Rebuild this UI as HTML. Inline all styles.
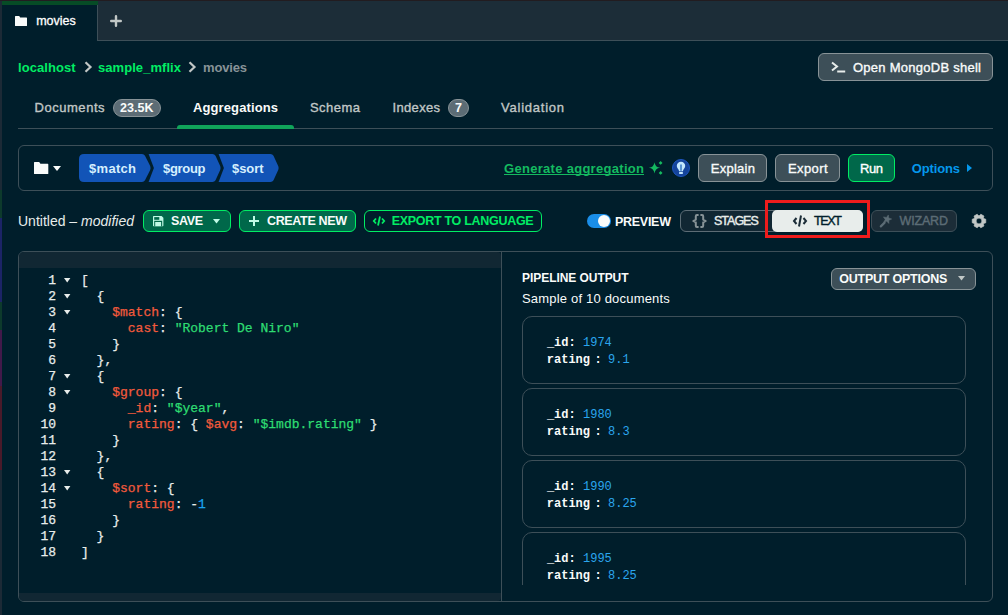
<!DOCTYPE html>
<html><head><meta charset="utf-8">
<style>
*{box-sizing:border-box;margin:0;padding:0}
html,body{width:1008px;height:615px;overflow:hidden;background:#001E2B;font-family:"Liberation Sans",sans-serif;color:#E8EDEB;position:relative}
.a{position:absolute}
.t{position:absolute;white-space:nowrap;line-height:1}
svg{position:absolute;overflow:visible}
</style></head><body>
<div class="a" style="left:0px;top:0px;width:1008px;height:1px;background:#221c20;"></div>
<div class="a" style="left:0px;top:1px;width:2px;height:614px;background:#1c2a36;"></div>
<div class="a" style="left:0px;top:190px;width:2px;height:28px;background:#0d3a2c;"></div>
<div class="a" style="left:0px;top:218px;width:2px;height:84px;background:#1c2466;"></div>
<div class="a" style="left:0px;top:302px;width:2px;height:28px;background:#0d3a2c;"></div>
<div class="a" style="left:0px;top:330px;width:2px;height:56px;background:#42194a;"></div>
<div class="a" style="left:0px;top:386px;width:2px;height:84px;background:#4a1a2a;"></div>
<div class="a" style="left:2px;top:1px;width:96px;height:4px;background:#064c26;"></div>
<div class="a" style="left:97px;top:1px;width:911px;height:40px;background:#1C2D38;border-left:1px solid #3D4F58;border-bottom:1px solid #3D4F58;"></div>
<div class="a" style="left:97px;top:1px;width:1px;height:4px;background:#064c26;"></div>
<svg style="left:15px;top:16px" width="12" height="10" viewBox="0 0 12 10"><path d="M0 0.6Q0 0 0.6 0H4.2L5.2 1.4H11.4Q12 1.4 12 2V9.4Q12 10 11.4 10H0.6Q0 10 0 9.4Z" fill="#F9FBFA"/></svg>
<div class="t" style="left:36.20px;top:14.72px;font-size:12.5px;color:#FFFFFF;-webkit-text-stroke:0.3px #FFFFFF;">movies</div>
<svg style="left:110px;top:15px" width="12" height="12" viewBox="0 0 12 12"><path d="M6 1.2V10.8M1.2 6H10.8" stroke="#C1C7C6" stroke-width="2.4" stroke-linecap="round"/></svg>
<div class="t" style="left:18.00px;top:61.00px;font-size:13px;color:#00ED64;font-weight:bold;letter-spacing:0.075px;">localhost</div>
<svg style="left:84px;top:61px" width="8" height="12" viewBox="0 0 8 12"><path d="M1.5 1.2L6.5 6L1.5 10.8" stroke="#C1C7C6" stroke-width="2.2" fill="none"/></svg>
<div class="t" style="left:98.00px;top:61.00px;font-size:13px;color:#00ED64;font-weight:bold;letter-spacing:0.055px;">sample_mflix</div>
<svg style="left:188px;top:61px" width="8" height="12" viewBox="0 0 8 12"><path d="M1.5 1.2L6.5 6L1.5 10.8" stroke="#C1C7C6" stroke-width="2.2" fill="none"/></svg>
<div class="t" style="left:203.00px;top:61.00px;font-size:13px;color:#889397;font-weight:bold;letter-spacing:-0.160px;">movies</div>
<div class="a" style="left:818px;top:53px;width:175px;height:28px;background:#3D4F58;border:1px solid #889397;border-radius:6px;"></div>
<svg style="left:831px;top:61px" width="15" height="13" viewBox="0 0 15 13"><path d="M1 1.5L6 5.5L1 9.5" stroke="#E8EDEB" stroke-width="2" fill="none"/><path d="M6.2 10.5H14.2" stroke="#E8EDEB" stroke-width="2"/></svg>
<div class="t" style="left:853.00px;top:61.00px;font-size:13px;color:#F9FBFA;letter-spacing:0.259px;-webkit-text-stroke:0.35px #F9FBFA;">Open MongoDB shell</div>
<div class="a" style="left:18px;top:128px;width:975px;height:1px;background:#3D4F58;"></div>
<div class="a" style="left:177px;top:125px;width:117px;height:4px;background:#10A45A;border-radius:3px 3px 0 0;"></div>
<div class="t" style="left:34.50px;top:101.00px;font-size:13px;color:#C1C7C6;letter-spacing:0.537px;-webkit-text-stroke:0.35px #C1C7C6;">Documents</div>
<div class="a" style="left:113px;top:99px;width:48px;height:18px;background:#5C6C75;border:1px solid #889397;border-radius:9px;"></div>
<div class="t" style="left:120.00px;top:102.12px;font-size:12.5px;color:#F9FBFA;font-weight:bold;letter-spacing:0.050px;">23.5K</div>
<div class="t" style="left:193.00px;top:101.00px;font-size:13px;color:#F9FBFA;font-weight:bold;letter-spacing:0.109px;">Aggregations</div>
<div class="t" style="left:310.00px;top:101.00px;font-size:13px;color:#C1C7C6;letter-spacing:0.440px;-webkit-text-stroke:0.35px #C1C7C6;">Schema</div>
<div class="t" style="left:392.50px;top:101.00px;font-size:13px;color:#C1C7C6;letter-spacing:0.333px;-webkit-text-stroke:0.35px #C1C7C6;">Indexes</div>
<div class="a" style="left:448px;top:99px;width:21px;height:18px;background:#5C6C75;border:1px solid #889397;border-radius:9px;"></div>
<div class="t" style="left:455.00px;top:102.12px;font-size:12.5px;color:#F9FBFA;font-weight:bold;">7</div>
<div class="t" style="left:501.00px;top:101.00px;font-size:13px;color:#C1C7C6;letter-spacing:0.767px;-webkit-text-stroke:0.35px #C1C7C6;">Validation</div>
<div class="a" style="left:18px;top:145px;width:975px;height:46px;background:transparent;border:1px solid #3D4F58;border-radius:6px;"></div>
<svg style="left:34px;top:162px" width="14.3" height="12" viewBox="0 0 14.3 12"><path d="M0 0.6Q0 0 0.6 0H5.2L6.4 1.8H13.7Q14.3 1.8 14.3 2.4V11.4Q14.3 12 13.7 12H0.6Q0 12 0 11.4Z" fill="#F9FBFA"/></svg>
<svg style="left:53px;top:166px" width="8" height="5" viewBox="0 0 8 5"><path d="M0 0H8L4 5Z" fill="#F9FBFA"/></svg>
<svg style="left:79px;top:154px" width="202" height="28" viewBox="0 0 202 28"><path d="M0 5Q0 0 5 0H63Q65 0 66 1.8L71.2 12Q72 14 71.2 16L66 26.2Q65 28 63 28H5Q0 28 0 23Z" fill="#1254B7"/><path d="M69.6 0H133.5Q135.5 0 136.5 1.8L141.2 12Q142 14 141.2 16L136.5 26.2Q135.5 28 133.5 28H69.6L74.9 14Z" fill="#1254B7"/><path d="M139.6 0H191.5Q193.5 0 194.5 1.8L199.2 12Q200 14 199.2 16L194.5 26.2Q193.5 28 191.5 28H139.6L144.9 14Z" fill="#1254B7"/></svg>
<div class="t" style="left:89.00px;top:162.00px;font-size:13px;color:#D6EFFE;font-weight:bold;letter-spacing:0.300px;">$match</div>
<div class="t" style="left:163.00px;top:162.00px;font-size:13px;color:#D6EFFE;font-weight:bold;letter-spacing:-0.320px;">$group</div>
<div class="t" style="left:232.00px;top:162.00px;font-size:13px;color:#D6EFFE;font-weight:bold;letter-spacing:-0.075px;">$sort</div>
<div class="t" style="left:504.00px;top:162.00px;font-size:13px;color:#14BA60;font-weight:bold;letter-spacing:0.295px;">Generate aggregation</div>
<div class="a" style="left:504px;top:174px;width:140px;height:1px;background:#14BA60;"></div>
<svg style="left:648px;top:161px" width="16" height="14" viewBox="0 0 16 14"><path d="M6.5 1.2Q7.1 6.2 12.1 6.8Q7.1 7.4 6.5 12.4Q5.9 7.4 0.9 6.8Q5.9 6.2 6.5 1.2Z" fill="#14BA60"/><path d="M12.6 0L14.5 1.9L12.6 3.8L10.7 1.9Z" fill="#14BA60"/><path d="M12.6 10L14.5 11.9L12.6 13.8L10.7 11.9Z" fill="#14BA60"/></svg>
<svg style="left:672px;top:159px" width="18" height="18" viewBox="0 0 18 18"><circle cx="9" cy="9" r="8.5" fill="#15449c" stroke="#1d56c0" stroke-width="1"/><path d="M9 2.7C6.6 2.7 4.8 4.5 4.8 6.8C4.8 8.3 5.6 9.3 6.3 10.2C6.8 10.8 7 11.4 7 12.2H11C11 11.4 11.2 10.8 11.7 10.2C12.4 9.3 13.2 8.3 13.2 6.8C13.2 4.5 11.4 2.7 9 2.7Z" fill="#C3E7FE"/><rect x="7" y="13" width="4" height="2" rx="0.8" fill="#C3E7FE"/><path d="M9 5.6V11.8" stroke="#2a6fc0" stroke-width="1.4"/></svg>
<div class="a" style="left:698px;top:154px;width:69px;height:28px;background:#3D4F58;border:1px solid #889397;border-radius:6px;"></div>
<div class="t" style="left:710.70px;top:162.00px;font-size:13px;color:#F9FBFA;letter-spacing:0.283px;-webkit-text-stroke:0.35px #F9FBFA;">Explain</div>
<div class="a" style="left:775px;top:154px;width:65px;height:28px;background:#3D4F58;border:1px solid #889397;border-radius:6px;"></div>
<div class="t" style="left:788.00px;top:162.00px;font-size:13px;color:#F9FBFA;letter-spacing:0.400px;-webkit-text-stroke:0.35px #F9FBFA;">Export</div>
<div class="a" style="left:848px;top:154px;width:47px;height:28px;background:#00684A;border:1px solid #00ED64;border-radius:6px;"></div>
<div class="t" style="left:860.00px;top:162.00px;font-size:13px;color:#FFFFFF;letter-spacing:-0.400px;-webkit-text-stroke:0.35px #FFFFFF;">Run</div>
<div class="t" style="left:911.70px;top:162.00px;font-size:13px;color:#0498EC;font-weight:bold;letter-spacing:-0.133px;">Options</div>
<svg style="left:967px;top:164px" width="5" height="8" viewBox="0 0 5 8"><path d="M0 0L5 4L0 8Z" fill="#0498EC"/></svg>
<div class="t" style="left:18px;top:214.15px;font-size:14px;color:#E8EDEB;">Untitled – <i>modified</i></div>
<div class="a" style="left:143px;top:210px;width:88px;height:22px;background:#00684A;border:1px solid #00ED64;border-radius:6px;"></div>
<svg style="left:152.8px;top:216px" width="10.4" height="10.2" viewBox="0 0 10.4 10.2"><path d="M0 0.6Q0 0 0.6 0H8.6L10.4 1.8V9.6Q10.4 10.2 9.8 10.2H0.6Q0 10.2 0 9.6Z" fill="#C0FAE6"/><rect x="1.2" y="1.1" width="5.1" height="2.7" fill="#00684A"/><rect x="1.2" y="4.8" width="8" height="5.4" fill="#00684A"/><rect x="2.2" y="6" width="5.9" height="4.2" fill="#C0FAE6"/></svg>
<div class="t" style="left:171.00px;top:215.42px;font-size:12.5px;color:#F9FBFA;font-weight:bold;letter-spacing:-0.367px;">SAVE</div>
<svg style="left:213px;top:219px" width="7" height="5" viewBox="0 0 7 5"><path d="M0 0H7L3.5 4.5Z" fill="#C0FAE6"/></svg>
<div class="a" style="left:239px;top:210px;width:117px;height:22px;background:#00684A;border:1px solid #00ED64;border-radius:6px;"></div>
<svg style="left:248px;top:215px" width="12" height="12" viewBox="0 0 12 12"><path d="M6 1V11M1 6H11" stroke="#C0FAE6" stroke-width="2"/></svg>
<div class="t" style="left:267.00px;top:215.42px;font-size:12.5px;color:#F9FBFA;font-weight:bold;letter-spacing:-0.344px;">CREATE NEW</div>
<div class="a" style="left:364px;top:210px;width:178px;height:22px;background:transparent;border:1px solid #00ED64;border-radius:6px;"></div>
<svg style="left:373px;top:216px" width="12" height="10" viewBox="0 0 12 10"><path d="M3 2.5L0.8 5L3 7.5M9 2.5L11.2 5L9 7.5M7 0.5L5 9.5" stroke="#00ED64" stroke-width="1.8" fill="none"/></svg>
<div class="t" style="left:391.70px;top:215.42px;font-size:12.5px;color:#00ED64;font-weight:bold;letter-spacing:-0.294px;">EXPORT TO LANGUAGE</div>
<div class="a" style="left:587px;top:214px;width:24px;height:14px;background:#1A8EE8;border-radius:7px;"></div>
<div class="a" style="left:598px;top:215px;width:12px;height:12px;background:#F9FBFA;border-radius:6px;"></div>
<div class="t" style="left:615.00px;top:216.42px;font-size:12.5px;color:#F9FBFA;font-weight:bold;letter-spacing:-0.283px;">PREVIEW</div>
<div class="a" style="left:680px;top:210px;width:183px;height:22px;background:#112733;border:1px solid #5C6C75;border-radius:6px;"></div>
<svg style="left:692.4px;top:214px" width="15" height="14" viewBox="0 0 15 14"><path d="M6.6 1H5Q3.8 1 3.8 2.2V5.6L1.3 7L3.8 8.4V11.8Q3.8 13 5 13H6.6M8.4 1H10Q11.2 1 11.2 2.2V5.6L13.7 7L11.2 8.4V11.8Q11.2 13 10 13H8.4" stroke="#889397" stroke-width="2" fill="none" stroke-linejoin="round"/></svg>
<div class="t" style="left:714.00px;top:215.42px;font-size:12.5px;color:#E8EDEB;letter-spacing:-1.000px;-webkit-text-stroke:0.4px #E8EDEB;">STAGES</div>
<div class="a" style="left:772px;top:210px;width:91px;height:22px;background:#E8EDEB;border-radius:5px;"></div>
<svg style="left:793px;top:215px" width="14" height="12" viewBox="0 0 14 12"><path d="M3.5 3L1 6L3.5 9M10.5 3L13 6L10.5 9M8 0.5L6 11.5" stroke="#1C2D38" stroke-width="2" fill="none"/></svg>
<div class="t" style="left:814.00px;top:215.42px;font-size:12.5px;color:#001E2B;letter-spacing:-1.333px;-webkit-text-stroke:0.4px #001E2B;">TEXT</div>
<div class="a" style="left:765px;top:200px;width:105px;height:38px;background:transparent;border:3px solid #EE1C1C;"></div>
<div class="a" style="left:871px;top:210px;width:86px;height:22px;background:#1C2D38;border:1px solid #3D4F58;border-radius:6px;"></div>
<svg style="left:878px;top:213px" width="16" height="16" viewBox="0 0 16 16"><path d="M2.8 13.4L6.6 9.6" stroke="#5C6C75" stroke-width="2.2" stroke-linecap="round"/><path d="M10.31 1.94 L10.74 5.02 L13.69 6.01 L10.89 7.37 L10.86 10.48 L8.71 8.24 L5.74 9.17 L7.20 6.43 L5.40 3.89 L8.46 4.44Z" fill="#5C6C75" stroke="#5C6C75" stroke-width="0.5" stroke-linejoin="round"/></svg>
<div class="t" style="left:899.60px;top:215.42px;font-size:12.5px;color:#5C6C75;letter-spacing:-0.180px;-webkit-text-stroke:0.4px #5C6C75;">WIZARD</div>
<svg style="left:971px;top:213px" width="16" height="16" viewBox="0 0 16 16"><path fill="#C1C7C6" fill-rule="evenodd" stroke="#C1C7C6" stroke-width="0.7" stroke-linejoin="round" d="M13.02 5.76 L14.76 6.20 L14.76 9.80 L13.02 10.24 L12.45 11.23 L12.94 12.96 L9.82 14.76 L8.57 13.47 L7.43 13.47 L6.18 14.76 L3.06 12.96 L3.55 11.23 L2.98 10.24 L1.24 9.80 L1.24 6.20 L2.98 5.76 L3.55 4.77 L3.06 3.04 L6.18 1.24 L7.43 2.53 L8.57 2.53 L9.82 1.24 L12.94 3.04 L12.45 4.77Z M8 5.1A2.9 2.9 0 1 0 8 10.9A2.9 2.9 0 1 0 8 5.1Z"/></svg>
<div class="a" style="left:18px;top:251px;width:975px;height:351px;background:transparent;border:1px solid #3D4F58;border-radius:6px;overflow:hidden;"></div>
<div class="a" style="left:19px;top:252px;width:482px;height:16px;background:#112733;border-radius:5px 4px 0 0;"></div>
<div class="a" style="left:19px;top:593px;width:482px;height:8px;background:#112733;border-radius:0 0 4px 5px;"></div>
<div class="a" style="left:501px;top:252px;width:1px;height:349px;background:#3D4F58;"></div>
<div class="a" style="left:0;top:272.54px;font-family:'Liberation Mono',monospace;font-size:13px;line-height:16px;white-space:pre;-webkit-text-stroke:0.25px currentColor">
<div class="a" style="left:0;top:0px;width:56px;text-align:right;color:#E8EDEB">1</div><svg style="left:64px;top:5.8px" width="6.4" height="4.4" viewBox="0 0 6.4 4.4"><path d="M0 0H6.4L3.2 4.4Z" fill="#E8EDEB"/></svg><div class="a" style="left:81px;top:0px"><span style="color:#E8EDEB">[</span></div>
<div class="a" style="left:0;top:16px;width:56px;text-align:right;color:#E8EDEB">2</div><svg style="left:64px;top:21.8px" width="6.4" height="4.4" viewBox="0 0 6.4 4.4"><path d="M0 0H6.4L3.2 4.4Z" fill="#E8EDEB"/></svg><div class="a" style="left:81px;top:16px"><span style="color:#E8EDEB">  {</span></div>
<div class="a" style="left:0;top:32px;width:56px;text-align:right;color:#E8EDEB">3</div><svg style="left:64px;top:37.8px" width="6.4" height="4.4" viewBox="0 0 6.4 4.4"><path d="M0 0H6.4L3.2 4.4Z" fill="#E8EDEB"/></svg><div class="a" style="left:81px;top:32px">    <span style="color:#F25A3C">$match</span><span style="color:#E8EDEB">: {</span></div>
<div class="a" style="left:0;top:48px;width:56px;text-align:right;color:#E8EDEB">4</div><div class="a" style="left:81px;top:48px">      <span style="color:#F25A3C">cast</span><span style="color:#E8EDEB">: </span><span style="color:#2EDC72">"Robert De Niro"</span></div>
<div class="a" style="left:0;top:64px;width:56px;text-align:right;color:#E8EDEB">5</div><div class="a" style="left:81px;top:64px"><span style="color:#E8EDEB">    }</span></div>
<div class="a" style="left:0;top:80px;width:56px;text-align:right;color:#E8EDEB">6</div><div class="a" style="left:81px;top:80px"><span style="color:#E8EDEB">  },</span></div>
<div class="a" style="left:0;top:96px;width:56px;text-align:right;color:#E8EDEB">7</div><svg style="left:64px;top:101.8px" width="6.4" height="4.4" viewBox="0 0 6.4 4.4"><path d="M0 0H6.4L3.2 4.4Z" fill="#E8EDEB"/></svg><div class="a" style="left:81px;top:96px"><span style="color:#E8EDEB">  {</span></div>
<div class="a" style="left:0;top:112px;width:56px;text-align:right;color:#E8EDEB">8</div><svg style="left:64px;top:117.8px" width="6.4" height="4.4" viewBox="0 0 6.4 4.4"><path d="M0 0H6.4L3.2 4.4Z" fill="#E8EDEB"/></svg><div class="a" style="left:81px;top:112px">    <span style="color:#F25A3C">$group</span><span style="color:#E8EDEB">: {</span></div>
<div class="a" style="left:0;top:128px;width:56px;text-align:right;color:#E8EDEB">9</div><div class="a" style="left:81px;top:128px">      <span style="color:#F25A3C">_id</span><span style="color:#E8EDEB">: </span><span style="color:#2EDC72">"$year"</span><span style="color:#E8EDEB">,</span></div>
<div class="a" style="left:0;top:144px;width:56px;text-align:right;color:#E8EDEB">10</div><div class="a" style="left:81px;top:144px">      <span style="color:#F25A3C">rating</span><span style="color:#E8EDEB">: { </span><span style="color:#F25A3C">$avg</span><span style="color:#E8EDEB">: </span><span style="color:#2EDC72">"$imdb.rating"</span><span style="color:#E8EDEB"> }</span></div>
<div class="a" style="left:0;top:160px;width:56px;text-align:right;color:#E8EDEB">11</div><div class="a" style="left:81px;top:160px"><span style="color:#E8EDEB">    }</span></div>
<div class="a" style="left:0;top:176px;width:56px;text-align:right;color:#E8EDEB">12</div><div class="a" style="left:81px;top:176px"><span style="color:#E8EDEB">  },</span></div>
<div class="a" style="left:0;top:192px;width:56px;text-align:right;color:#E8EDEB">13</div><svg style="left:64px;top:197.8px" width="6.4" height="4.4" viewBox="0 0 6.4 4.4"><path d="M0 0H6.4L3.2 4.4Z" fill="#E8EDEB"/></svg><div class="a" style="left:81px;top:192px"><span style="color:#E8EDEB">  {</span></div>
<div class="a" style="left:0;top:208px;width:56px;text-align:right;color:#E8EDEB">14</div><svg style="left:64px;top:213.8px" width="6.4" height="4.4" viewBox="0 0 6.4 4.4"><path d="M0 0H6.4L3.2 4.4Z" fill="#E8EDEB"/></svg><div class="a" style="left:81px;top:208px">    <span style="color:#F25A3C">$sort</span><span style="color:#E8EDEB">: {</span></div>
<div class="a" style="left:0;top:224px;width:56px;text-align:right;color:#E8EDEB">15</div><div class="a" style="left:81px;top:224px">      <span style="color:#F25A3C">rating</span><span style="color:#E8EDEB">: -</span><span style="color:#1AA3EE">1</span></div>
<div class="a" style="left:0;top:240px;width:56px;text-align:right;color:#E8EDEB">16</div><div class="a" style="left:81px;top:240px"><span style="color:#E8EDEB">    }</span></div>
<div class="a" style="left:0;top:256px;width:56px;text-align:right;color:#E8EDEB">17</div><div class="a" style="left:81px;top:256px"><span style="color:#E8EDEB">  }</span></div>
<div class="a" style="left:0;top:272px;width:56px;text-align:right;color:#E8EDEB">18</div><div class="a" style="left:81px;top:272px"><span style="color:#E8EDEB">]</span></div>
</div>
<div class="t" style="left:522.10px;top:271.54px;font-size:12px;color:#F9FBFA;font-weight:bold;letter-spacing:-0.064px;">PIPELINE OUTPUT</div>
<div class="t" style="left:522.00px;top:292.00px;font-size:13px;color:#F9FBFA;letter-spacing:0.190px;">Sample of 10 documents</div>
<div class="a" style="left:831px;top:268px;width:145px;height:22px;background:#3D4F58;border:1px solid #889397;border-radius:6px;"></div>
<div class="t" style="left:839.30px;top:272.92px;font-size:12.5px;color:#F9FBFA;font-weight:bold;letter-spacing:-0.238px;">OUTPUT OPTIONS</div>
<svg style="left:958px;top:276px" width="7" height="5" viewBox="0 0 7 5"><path d="M0 0H7L3.5 4.5Z" fill="#C1C7C6"/></svg>
<div class="a" style="left:502px;top:252px;width:490px;height:333px;overflow:hidden">
<div class="a" style="left:20px;top:64px;width:444px;height:68px;background:transparent;border:1px solid #3D4F58;border-radius:10px;"></div>
<div class="t" style="left:44.90px;top:85.30px;font-size:12px;color:#F9FBFA;font-weight:bold;font-family:'Liberation Mono',monospace;">_id:</div>
<div class="t" style="left:81.00px;top:85.30px;font-size:12px;color:#2BA6EE;font-family:'Liberation Mono',monospace;">1974</div>
<div class="t" style="left:44.80px;top:102.10px;font-size:12px;color:#F9FBFA;font-weight:bold;font-family:'Liberation Mono',monospace;">rating</div>
<div class="t" style="left:92.40px;top:102.10px;font-size:12px;color:#F9FBFA;font-weight:bold;font-family:'Liberation Mono',monospace;">:</div>
<div class="t" style="left:106.00px;top:102.10px;font-size:12px;color:#2BA6EE;font-family:'Liberation Mono',monospace;">9.1</div>
<div class="a" style="left:20px;top:136px;width:444px;height:68px;background:transparent;border:1px solid #3D4F58;border-radius:10px;"></div>
<div class="t" style="left:44.90px;top:157.30px;font-size:12px;color:#F9FBFA;font-weight:bold;font-family:'Liberation Mono',monospace;">_id:</div>
<div class="t" style="left:81.00px;top:157.30px;font-size:12px;color:#2BA6EE;font-family:'Liberation Mono',monospace;">1980</div>
<div class="t" style="left:44.80px;top:174.10px;font-size:12px;color:#F9FBFA;font-weight:bold;font-family:'Liberation Mono',monospace;">rating</div>
<div class="t" style="left:92.40px;top:174.10px;font-size:12px;color:#F9FBFA;font-weight:bold;font-family:'Liberation Mono',monospace;">:</div>
<div class="t" style="left:106.00px;top:174.10px;font-size:12px;color:#2BA6EE;font-family:'Liberation Mono',monospace;">8.3</div>
<div class="a" style="left:20px;top:208px;width:444px;height:68px;background:transparent;border:1px solid #3D4F58;border-radius:10px;"></div>
<div class="t" style="left:44.90px;top:229.30px;font-size:12px;color:#F9FBFA;font-weight:bold;font-family:'Liberation Mono',monospace;">_id:</div>
<div class="t" style="left:81.00px;top:229.30px;font-size:12px;color:#2BA6EE;font-family:'Liberation Mono',monospace;">1990</div>
<div class="t" style="left:44.80px;top:246.10px;font-size:12px;color:#F9FBFA;font-weight:bold;font-family:'Liberation Mono',monospace;">rating</div>
<div class="t" style="left:92.40px;top:246.10px;font-size:12px;color:#F9FBFA;font-weight:bold;font-family:'Liberation Mono',monospace;">:</div>
<div class="t" style="left:106.00px;top:246.10px;font-size:12px;color:#2BA6EE;font-family:'Liberation Mono',monospace;">8.25</div>
<div class="a" style="left:20px;top:280px;width:444px;height:68px;background:transparent;border:1px solid #3D4F58;border-radius:10px;"></div>
<div class="t" style="left:44.90px;top:301.30px;font-size:12px;color:#F9FBFA;font-weight:bold;font-family:'Liberation Mono',monospace;">_id:</div>
<div class="t" style="left:81.00px;top:301.30px;font-size:12px;color:#2BA6EE;font-family:'Liberation Mono',monospace;">1995</div>
<div class="t" style="left:44.80px;top:318.10px;font-size:12px;color:#F9FBFA;font-weight:bold;font-family:'Liberation Mono',monospace;">rating</div>
<div class="t" style="left:92.40px;top:318.10px;font-size:12px;color:#F9FBFA;font-weight:bold;font-family:'Liberation Mono',monospace;">:</div>
<div class="t" style="left:106.00px;top:318.10px;font-size:12px;color:#2BA6EE;font-family:'Liberation Mono',monospace;">8.25</div>
</div>
</body></html>
